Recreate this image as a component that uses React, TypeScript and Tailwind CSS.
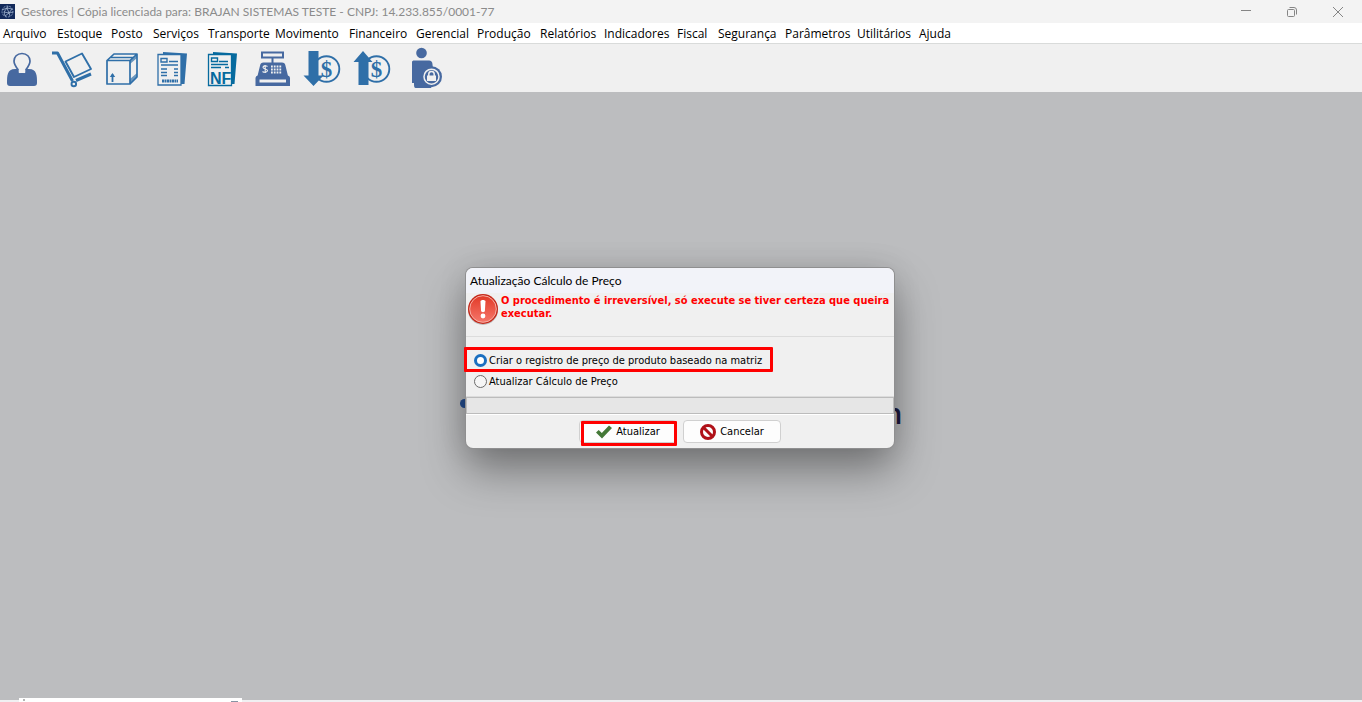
import { useState } from "react";
import type { ReactNode } from "react";

const BLUE = "#2f6fa8";
const INDIGO = "#4769a0";

const menus = [
  "Arquivo", "Estoque", "Posto", "Serviços", "Transporte", "Movimento", "Financeiro", "Gerencial",
  "Produção", "Relatórios", "Indicadores", "Fiscal", "Segurança", "Parâmetros", "Utilitários", "Ajuda",
];

function Icon({ children, className = "size-10 overflow-visible" }: { children: ReactNode; className?: string }) {
  return (
    <svg viewBox="0 0 40 40" className={className} fill="none" aria-hidden="true">
      {children}
    </svg>
  );
}

function PersonIcon() {
  return (
    <Icon>
      <path d="M5 34c0-7 0-14 8-14h4c1 2 5 2 6 0h4c8 0 8 7 8 14 0 2-1 3-3 3H8c-2 0-3-1-3-3Z" fill={INDIGO} />
      <path d="M20 4.500c5 0 8 3.500 8 7.500 0 3-2 6-4 8.500v2.500c-2 2-6 2-8 0v-2.500c-2-2.500-4-5.500-4-8.500 0-4 3-7.500 8-7.500Z" fill="#f0f0f0" stroke={INDIGO} strokeWidth="1.700" />
      <path d="M16.800 21h6.400v3h-6.400z" fill="#f0f0f0" />
    </Icon>
  );
}

function CartIcon() {
  return (
    <Icon>
      <path d="M0 4h5.500L20.500 32" stroke={BLUE} strokeWidth="3" strokeLinejoin="round" />
      <path d="M13.500 12.500 30 4.500 39 20 22 28Z" stroke={BLUE} strokeWidth="1.900" strokeLinejoin="round" />
      <circle cx="21.800" cy="35" r="2.300" stroke={BLUE} strokeWidth="1.900" />
      <path d="M24 31.500 39 25" stroke={BLUE} strokeWidth="3" />
    </Icon>
  );
}

function BoxIcon() {
  return (
    <Icon>
      <path d="M5 11.500h23V35H5ZM5 11.500l7-6.500h23l-7 6.500M35 5v23l-7 7M8.500 8.500H31" stroke={BLUE} strokeWidth="1.700" strokeLinejoin="round" />
      <path d="m28 11.500 7-6.500v4l-7 6ZM28 35v-5l7-6v4Z" fill={BLUE} opacity=".7" />
      <path d="M10.500 33v-7.500" stroke={BLUE} strokeWidth="1.800" />
      <path d="m7.800 28 2.700-4 2.700 4Z" fill={BLUE} />
    </Icon>
  );
}

function ReportIcon() {
  return (
    <Icon>
      <path d="M11 3 35 4.500 32.500 35H29V6l-18-1Z" fill={BLUE} />
      <path d="M6 5.500h23v30.500H6Z" fill="#f0f0f0" stroke={BLUE} strokeWidth="1.300" />
      <path d="M9 9.500h6v3.500H9ZM17 12.500h9M9 16h17M9 20h6M9 23.500h6M9 26.500h6M22 20h4M22 23.500h4M22 26.500h4" stroke={BLUE} strokeWidth="1.400" />
      <path d="M10 32h16" stroke={BLUE} strokeWidth="3" strokeDasharray="2 .5" />
    </Icon>
  );
}

function InvoiceIcon() {
  return (
    <Icon>
      <path d="M11 3 35 4.500 32.500 35H30V6l-19-1Z" fill="#066a9e" />
      <path d="M6.500 5.500h23v31h-23Z" fill="#f0f0f0" stroke="#066a9e" strokeWidth="1.300" />
      <path d="M9.500 9h6v3.500h-6ZM17 12.500h9M9 15.500h17M9 18.500h10M23 18.500h4" stroke="#066a9e" strokeWidth="1.400" />
      <text x="8" y="34.500" fontFamily="Liberation Sans" fontSize="16" fontWeight="700" fill="#066a9e">NF</text>
    </Icon>
  );
}

function RegisterIcon() {
  return (
    <Icon>
      <path d="M10 3.500h21v5H10ZM20.500 9v6" stroke={INDIGO} strokeWidth="2" />
      <path d="M11.500 13.500H30c2 0 3 1 3.300 2.500L36 27H5.500L8.200 16c.3-1.500 1.300-2.500 3.300-2.500Z" fill={INDIGO} />
      <path d="M6.500 26.500H35a3 3 0 0 1 3 3V37H3.500v-7.500a3 3 0 0 1 3-3Z" fill={INDIGO} />
      <path d="M7.500 30.500h26.500v3H7.500Z" fill="#f0f0f0" />
      <path d="M19 17.500h11M19 20.500h11M19 23.500h11" stroke="#f0f0f0" strokeWidth="1.800" strokeDasharray="1.800 1" />
      <path d="M15.500 17.500c-2-1.500-4.500-.5-4.500 1s4.500 1.500 4.500 3-3 2.500-5 1M13.200 16v8" stroke="#f0f0f0" strokeWidth="1.100" />
    </Icon>
  );
}

function CoinIcon({ up }: { up?: boolean }) {
  return (
    <Icon>
      <circle cx="24.500" cy="20" r="12.800" stroke={BLUE} strokeWidth="1.900" />
      <text x="24.500" y="27.500" textAnchor="middle" fontFamily="Liberation Serif" fontSize="23" fontWeight="700" fill={BLUE}>$</text>
      {up ? (
        <path d="M6.500 36V13H1.500L11 2 20.500 13h-4v23Z" fill={BLUE} />
      ) : (
        <path d="M6.500 2h10v24.500h5L11.500 37 1.500 26.500h5Z" fill={BLUE} />
      )}
    </Icon>
  );
}

function LockUserIcon() {
  return (
    <Icon>
      <circle cx="15.500" cy="4" r="5.300" fill={INDIGO} />
      <path d="M6 13c0-1 1-1.500 2-1.500h15c2 0 3.500 1.500 3.500 4L28 28l-3 11H9.500c-1.500 0-1.500-3-1.500-5H6Z" fill={INDIGO} />
      <circle cx="25.500" cy="27.700" r="10.500" fill={INDIGO} />
      <circle cx="25.500" cy="27.700" r="7.500" stroke="#f0f0f0" strokeWidth="1.500" />
      <path d="M21 26.500h9V32h-9Z" fill="#f0f0f0" />
      <path d="M22.800 27v-2c0-3.500 5.400-3.500 5.400 0v2" stroke="#f0f0f0" strokeWidth="1.500" />
    </Icon>
  );
}

const tools = [
  { label: "Clientes", icon: <PersonIcon /> },
  { label: "Compras", icon: <CartIcon /> },
  { label: "Produtos", icon: <BoxIcon /> },
  { label: "Pedidos", icon: <ReportIcon /> },
  { label: "Nota fiscal", icon: <InvoiceIcon /> },
  { label: "Caixa", icon: <RegisterIcon /> },
  { label: "Contas a receber", icon: <CoinIcon /> },
  { label: "Contas a pagar", icon: <CoinIcon up /> },
  { label: "Trocar usuário", icon: <LockUserIcon /> },
];

function TitleBar() {
  return (
    <header className="flex h-[23px] items-center bg-[#f3f3f3] text-[#8b8b8b]">
      <svg viewBox="0 0 15 15" className="mr-[6px] size-[15px]" fill="none" aria-hidden="true">
        <path d="M0 0h15v15H0Z" fill="#12295a" />
        <circle cx="7.500" cy="7.500" r="5.500" stroke="#9db4d4" strokeWidth=".8" strokeDasharray="2 1" />
        <path d="m2 6 5-2 5 1-3 4-5-1 3-4 2 5 1 3M4 8l1 4 4-3 4-1M7 4l1-2" stroke="#b5c7df" strokeWidth=".7" />
      </svg>
      <h1 className="flex-1 font-[Lato,sans-serif] text-[12px] leading-4 whitespace-nowrap">
        Gestores | Cópia licenciada para: BRAJAN SISTEMAS TESTE - CNPJ: 14.233.855/0001-77
      </h1>
      <div className="flex h-5 items-center gap-9 pr-[19px]">
        <button type="button" aria-label="Minimizar">
          <svg viewBox="0 0 10 10" className="size-[10px]" fill="none"><path d="M0 3.500h10" stroke="#858585" /></svg>
        </button>
        <button type="button" aria-label="Restaurar">
          <svg viewBox="0 0 10 10" className="size-[10px]" fill="none">
            <rect x=".5" y="2.500" width="7" height="7" rx="1" stroke="#858585" />
            <path d="M2.500.5H7A2.500 2.500 0 0 1 9.500 3v4.500" stroke="#858585" />
          </svg>
        </button>
        <button type="button" aria-label="Fechar">
          <svg viewBox="0 0 10 10" className="size-[10px]" fill="none"><path d="m0 0 10 10M10 0 0 10" stroke="#858585" /></svg>
        </button>
      </div>
    </header>
  );
}

function AlertIcon() {
  return (
    <svg viewBox="0 0 32 32" className="size-8 shrink-0" fill="none" aria-hidden="true">
      <defs>
        <linearGradient id="alert" x1="0" y1="0" x2="0" y2="1">
          <stop stopColor="#e23a27" />
          <stop offset="1" stopColor="#f5766a" />
        </linearGradient>
      </defs>
      <circle cx="16" cy="17" r="15" fill="#8a8a8a" opacity=".5" />
      <circle cx="16" cy="16" r="15" fill="#c5281a" />
      <circle cx="16" cy="16" r="13.300" fill="url(#alert)" stroke="#f7b0a6" />
      <path d="M13.500 8.500c0-2 5-2 5 0l-.6 9.500c-.2 1.500-3.600 1.500-3.800 0Z" fill="#fff" />
      <circle cx="16" cy="23" r="2.400" fill="#fff" />
    </svg>
  );
}

function Option({ label, checked, onSelect }: { label: string; checked: boolean; onSelect: () => void }) {
  return (
    <label className="flex h-[21px] items-center gap-[2px] whitespace-nowrap">
      <input
        type="radio"
        name="modo"
        checked={checked}
        onChange={onSelect}
        className="size-[13px] appearance-none rounded-full border border-[#6b6b6b] bg-[#f6f6f6] checked:border-[3px] checked:border-[#1a6fc0] checked:bg-white"
      />
      {label}
    </label>
  );
}

function PriceDialog() {
  const [mode, setMode] = useState(0);
  return (
    <section
      role="dialog"
      aria-labelledby="dialog-title"
      className="relative flex w-[428px] flex-col rounded-[7px] bg-[#f0f0f0] font-['DejaVu_Sans_Condensed','DejaVu_Sans',sans-serif] text-[11px] leading-[13px] text-black shadow-[0_0_0_1px_#8f8f90,0_22px_44px_rgba(0,0,0,0.38),0_0_30px_rgba(0,0,0,0.1)]"
    >
      <h2 id="dialog-title" className="h-[25px] rounded-t-[7px] bg-[#f2f3f9] pl-1 font-[Lato,sans-serif] text-[12px] leading-[26px]">
        Atualização Cálculo de Preço
      </h2>
      <div className="flex h-[43px] gap-[2px] pl-px">
        <AlertIcon />
        <p className="pt-px font-bold text-[#ff0000]">O procedimento é irreversível, só execute se tiver certeza que queira executar.</p>
      </div>
      <fieldset className="h-[61px] border-y border-[#dcdcdc] pt-[13px] pl-2">
        <div className="relative">
          <Option label="Criar o registro de preço de produto baseado na matriz" checked={mode === 0} onSelect={() => setMode(0)} />
          <div className="pointer-events-none absolute -top-[3px] -left-[10px] h-[25px] w-[309px] rounded-[1px] border-[3px] border-[#ff0000]" />
        </div>
        <Option label="Atualizar Cálculo de Preço" checked={mode === 1} onSelect={() => setMode(1)} />
      </fieldset>
      <div role="progressbar" aria-valuenow={0} className="h-[17px] border border-[#bcbcbc] bg-[#e6e6e6]" />
      <div className="flex h-[34px] gap-[6px] rounded-b-[7px] border-t border-white pt-[5px] pl-[113px]">
        <div className="relative">
          <button type="button" className="flex h-[23px] w-[98px] items-center justify-center gap-1 rounded-[4px] border border-[#d0d0d0] bg-[#fdfdfd]">
            <svg viewBox="0 0 16 14" className="h-[14px] w-4" aria-hidden="true">
              <path d="M0 7.500 2.700 5l3.100 3L13 .5 16 3 6 13.500Z" fill="#447837" />
            </svg>
            Atualizar
          </button>
          <div className="pointer-events-none absolute top-px left-[2px] h-[25px] w-24 rounded-[1px] border-[3px] border-[#ff0000]" />
        </div>
        <button type="button" className="flex h-[23px] w-[98px] items-center justify-center gap-1 rounded-[4px] border border-[#d0d0d0] bg-[#fdfdfd]">
          <svg viewBox="0 0 16 16" className="size-4" fill="none" aria-hidden="true">
            <circle cx="8" cy="8" r="6.500" stroke="#b01118" strokeWidth="3" />
            <path d="m3.500 3.500 9 9" stroke="#b01118" strokeWidth="3" />
          </svg>
          Cancelar
        </button>
      </div>
    </section>
  );
}

export default function App() {
  return (
    <div className="flex h-screen flex-col overflow-hidden bg-[#bcbdbf] font-['Open_Sans','Noto_Sans',sans-serif]">
      <TitleBar />
      <nav className="grid h-[21px] grid-cols-[54px_54px_42px_55px_67px_74px_67px_61px_63px_64px_73px_41px_67px_72px_62px_1fr] border-b border-[#d9dbda] bg-white pl-[3px] text-[12px] leading-[21px] text-black">
        {menus.map((name) => (
          <button key={name} type="button" className="text-left whitespace-nowrap">{name}</button>
        ))}
      </nav>
      <div role="toolbar" aria-label="Atalhos" className="flex h-12 items-center gap-[10px] bg-[#f0f0f0] pt-[2px] pl-[2px]">
        {tools.map((tool, i) => (
          <button key={tool.label} type="button" aria-label={tool.label} className={i === 8 ? "pl-1" : ""}>
            {tool.icon}
          </button>
        ))}
      </div>
      <main className="relative flex flex-1 items-center justify-center pr-[2px] pb-[76px]">
        <div className="absolute inset-x-0 top-[305px] flex justify-center" aria-hidden="true">
          <div className="flex w-[443px] items-start justify-between">
            <span className="mt-[2px] size-[9px] rounded-full bg-[#254f93]" />
            <span className="text-[29px] leading-8 font-semibold text-[#1c1b3f]">n</span>
          </div>
        </div>
        <PriceDialog />
      </main>
      <footer className="relative h-[2px] bg-[#f0f0f2]">
        <div className="absolute bottom-0 left-[19px] flex h-1 w-[223px] items-start justify-between bg-white pt-px pr-1 pl-1">
          <span className="size-[2px] bg-[#b5b5b5]" />
          <span className="mt-[2px] h-px w-[7px] bg-[#8794a4]" />
        </div>
      </footer>
    </div>
  );
}
